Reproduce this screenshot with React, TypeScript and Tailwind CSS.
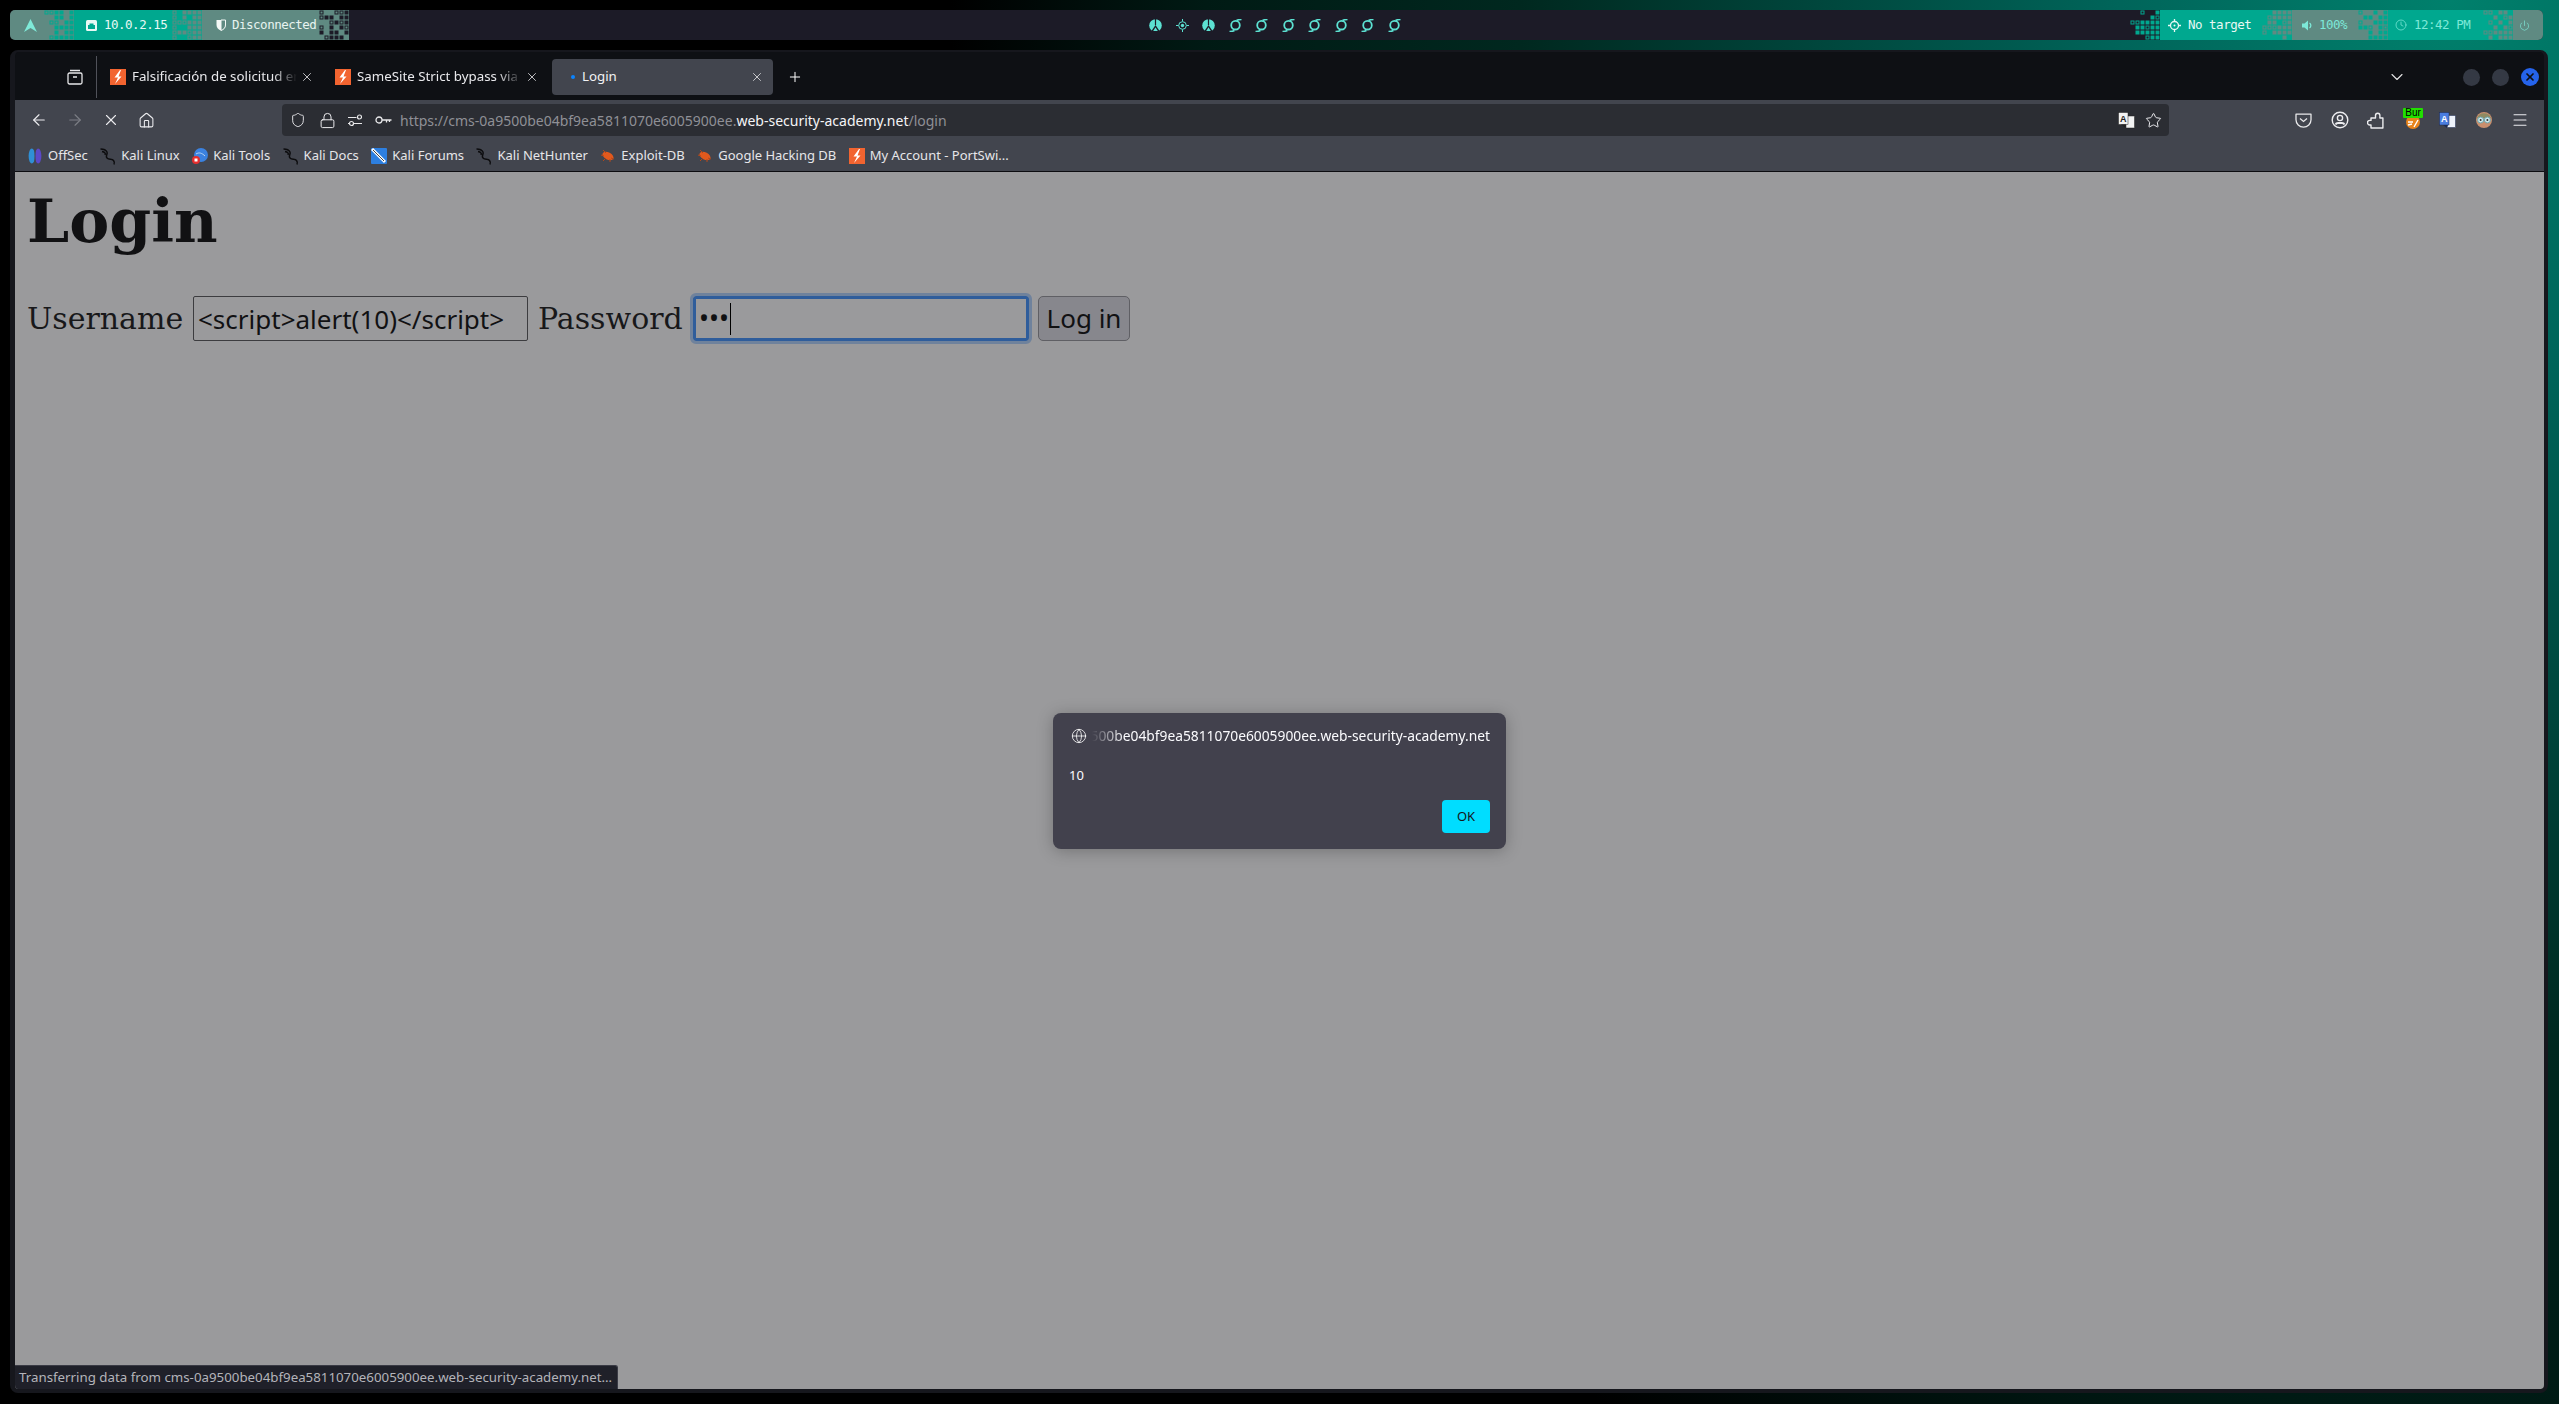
import React from "react";
import {
  ArrowLeft,
  ArrowRight,
  ChevronDown,
  Clock,
  Globe,
  House,
  Lock,
  Menu,
  Plus,
  Power,
  Shield,
  Star,
  X,
} from "lucide-react";

const TEAL = "#00a88f";
const GREY = "#5f8a82";
const DARK = "#1c1b27";

// pixel fade between two bar segments
const Dither = ({ from, to, seed }: { from: string; to: string; seed: number }) => {
  const cells: React.ReactNode[] = [];
  for (let c = 0; c < 6; c++) {
    for (let r = 0; r < 6; r++) {
      const h = Math.abs(Math.sin((c + 1) * 12.9898 + (r + 1) * 78.233 + seed) * 43758.5453) % 1;
      const h2 = (h * 7.31) % 1;
      const x = c * 5 + 0.5;
      const y = r * 5 + 0.5;
      if (h < (c + 0.5) / 6) {
        cells.push(<rect key={`${c}-${r}`} x={x} y={y} width={4} height={4} fill={to} />);
      } else if (h2 < 0.3) {
        cells.push(
          <rect key={`${c}-${r}`} x={x + 0.5} y={y + 0.5} width={3} height={3} fill="none" stroke={to} strokeWidth={1} />
        );
      }
    }
  }
  return (
    <svg width="30" height="30" viewBox="0 0 30 30" className="shrink-0" style={{ background: from }}>
      {cells}
    </svg>
  );
};

const Swirl = () => (
  <svg width="13" height="13" viewBox="0 0 13 13" fill="none">
    <circle cx="6.5" cy="6.2" r="4.3" stroke="#5ce1d2" strokeWidth="1.8" />
    <path d="M0.5 12.5c2 0 3.5-.3 5-1M12.5.5c-2 0-3.5.3-5 1" stroke="#5ce1d2" strokeWidth="1.6" />
  </svg>
);

const Radiation = () => (
  <svg width="13" height="13" viewBox="0 0 13 13">
    <circle cx="6.5" cy="6.5" r="6.3" fill="#5ce1d2" />
    <path d="M6.5 0v6" stroke="#1c1b27" strokeWidth="1.2" />
    <path d="M6.500 6 1.800 13h9.400z" fill="#1c1b27" />
    <path d="M6.500 8.200 4.200 12h4.600z" fill="#5ce1d2" />
  </svg>
);

const Target = () => (
  <svg width="13" height="13" viewBox="0 0 13 13" fill="none" stroke="#5ce1d2">
    <circle cx="6.5" cy="6.5" r="3.8" />
    <circle cx="6.5" cy="6.5" r="1.7" fill="#5ce1d2" stroke="none" />
    <path d="M6.5 0v2.5M6.5 10.5V13M0 6.5h2.5M10.5 6.5H13" />
  </svg>
);

const PortSwigger = () => (
  <svg width="16" height="16" viewBox="0 0 16 16" className="shrink-0">
    <rect width="16" height="16" fill="#f26430" />
    <path d="M10 1 4.500 8.500h3.500L5 15l6.500-7.500H8.500L11 1z" fill="#fff" />
  </svg>
);

const Dragon = () => (
  <svg width="16" height="17" viewBox="0 0 16 17" fill="none" stroke="#0c0c0e" strokeWidth="1.5" className="shrink-0">
    <path d="M0.500 1c3.500 0 5.500 1 6.500 3S5 8 7 10s5 .5 6.500 2.500.5 4 .5 4M2 3.500C4.500 4 6 5 5 7" />
  </svg>
);

const Roach = () => (
  <svg width="16" height="16" viewBox="0 0 16 16" className="shrink-0">
    <ellipse cx="8" cy="8" rx="6" ry="3.6" fill="#e2591d" transform="rotate(28 8 8)" />
    <path d="M3 2l3 3M1 7l3 1M3 13l3-3M10 14l0-3M14 11l-3-1" stroke="#b3481a" strokeWidth="1" />
  </svg>
);

const OffSecIcon = () => (
  <svg width="16" height="16" viewBox="0 0 16 16" className="shrink-0">
    <ellipse cx="4.8" cy="8" rx="3.2" ry="7.4" fill="#2f8fd6" />
    <ellipse cx="11.2" cy="8" rx="3.2" ry="7.4" fill="#5b49c9" />
    <rect x="7.5" y="0" width="1" height="16" fill="#42454e" />
  </svg>
);

const KaliToolsIcon = () => (
  <svg width="16" height="16" viewBox="0 0 16 16" className="shrink-0">
    <circle cx="9" cy="7" r="7" fill="#3b82e0" />
    <path d="M4 6c3-2 6-1 9 2" stroke="#b9d6f5" strokeWidth="1" fill="none" />
    <circle cx="4" cy="12" r="4" fill="#e52e2e" />
    <rect x="2.5" y="10.5" width="3" height="3" fill="#fff" />
  </svg>
);

const ForumsIcon = () => (
  <svg width="16" height="16" viewBox="0 0 16 16" className="shrink-0">
    <rect width="16" height="16" rx="1" fill="#2d7fe0" />
    <path d="M1 1l13 13" stroke="#fff" strokeWidth="3" />
    <path d="M2 2l11 11" stroke="#111" strokeWidth="0.8" />
  </svg>
);

const Translate = () => (
  <svg width="17" height="17" viewBox="0 0 17 17">
    <rect x="8" y="4" width="8.5" height="12" fill="#f2f2f2" stroke="#222" strokeWidth="0.5" />
    <rect x="0.5" y="0.5" width="9.5" height="12" fill="#f2f2f2" stroke="#222" strokeWidth="0.5" />
    <path d="M3 12.5h5l-1 3z" fill="#222" />
    <text x="5.2" y="10" fontSize="9" fontWeight="700" textAnchor="middle" fontFamily="'Liberation Sans', sans-serif" fill="#222">
      A
    </text>
  </svg>
);

const BlueTranslate = () => (
  <svg width="17" height="17" viewBox="0 0 17 17">
    <rect x="8" y="3.5" width="8.5" height="12" fill="#eef3fb" stroke="#1d2b52" strokeWidth="0.5" />
    <rect x="0.5" y="0.5" width="9.5" height="12.5" fill="#4a7de0" stroke="#1d2b52" strokeWidth="0.5" />
    <path d="M4 13h5l-1 3z" fill="#1d2b52" />
    <text x="5.2" y="10" fontSize="9" fontWeight="700" textAnchor="middle" fontFamily="'Liberation Sans', sans-serif" fill="#fff">
      A
    </text>
  </svg>
);

const Avatar = () => (
  <svg width="16" height="16" viewBox="0 0 16 16">
    <circle cx="8" cy="8" r="8" fill="#c98f6e" />
    <path d="M1 6a7.5 7.5 0 0 1 14 0z" fill="#8f8a62" />
    <circle cx="4.6" cy="8" r="3" fill="#cfe9ec" stroke="#6fa6ac" />
    <circle cx="11.4" cy="8" r="3" fill="#cfe9ec" stroke="#6fa6ac" />
    <circle cx="4.6" cy="8" r="1" fill="#333" />
    <circle cx="11.4" cy="8" r="1" fill="#333" />
  </svg>
);

const BurpExt = () => (
  <div className="relative flex h-[18px] w-[20px] items-end justify-center">
    <svg width="16" height="15" viewBox="0 0 16 15">
      <circle cx="8" cy="8" r="7" fill="#e8841c" />
      <path d="M3 8h5M3 11l4-1M9 13l4-7" stroke="#fff" strokeWidth="1.4" />
    </svg>
    <span className="absolute left-0 top-[-3px] h-[10px] w-[20px] overflow-hidden rounded-[1px] bg-[#22e000] text-center text-[10px] leading-[10px] text-black [font-family:'Liberation_Sans',sans-serif]">
      Bur
    </span>
  </div>
);

const Sliders = () => (
  <svg width="16" height="16" viewBox="0 0 16 16" fill="none" stroke="#e8e8ea" strokeWidth="1.2">
    <path d="M1 5.5h8.5M1 11.5h1.500M7 11.500h8" />
    <circle cx="12.5" cy="5" r="2" />
    <circle cx="4.5" cy="11.5" r="2" />
  </svg>
);

const Key = () => (
  <svg width="17" height="10" viewBox="0 0 17 10" fill="none" stroke="#e8e8ea" strokeWidth="1.300">
    <circle cx="4" cy="5" r="3" />
    <path d="M7 5h9.500M11.500 5v2.500M14.500 5v2" />
  </svg>
);

const Pocket = () => (
  <svg width="17" height="15" viewBox="0 0 17 15" fill="none" stroke="#e8e8ea" strokeWidth="1.3">
    <path d="M1 1.2h15v5.5a7.5 7.5 0 0 1-15 0z" strokeLinejoin="round" />
    <path d="M5 5.5l3.5 3 3.5-3" />
  </svg>
);

const Account = () => (
  <svg width="18" height="18" viewBox="0 0 18 18" fill="none" stroke="#ececef" strokeWidth="1.4">
    <circle cx="9" cy="9" r="7.800" />
    <circle cx="9" cy="7" r="2.600" />
    <path d="M4.500 13.500c.5-1 1.500-1.500 2.500-1.500h4c1 0 2 .5 2.500 1.500" strokeWidth="2" />
  </svg>
);

const Extension = () => (
  <svg width="17" height="17" viewBox="0 0 17 17" fill="none" stroke="#ececef" strokeWidth="1.400" strokeLinejoin="round">
    <path d="M6 6h2.500V3.500a2.200 2.200 0 0 1 4.400 0V6h3v10H4v-3H2.800a2.300 2.300 0 0 1 0-4.600H4V6z" />
  </svg>
);

const tabClose = <X size={14} strokeWidth={1.4} className="ml-auto shrink-0 text-[#e4e4e6]" />;

const Tab = ({ title }: { title: string }) => (
  <div className="flex h-[36px] w-[221px] shrink-0 items-center pl-[8px] pr-[9px]">
    <PortSwigger />
    <span className="ml-[6px] w-[165px] overflow-hidden whitespace-nowrap text-[13.3px] text-[#e9e9ec] [mask-image:linear-gradient(to_left,transparent,black_24px)]">
      {title}
    </span>
    {tabClose}
  </div>
);

const bookmarks: [React.ReactNode, string][] = [
  [<OffSecIcon />, "OffSec"],
  [<Dragon />, "Kali Linux"],
  [<KaliToolsIcon />, "Kali Tools"],
  [<Dragon />, "Kali Docs"],
  [<ForumsIcon />, "Kali Forums"],
  [<Dragon />, "Kali NetHunter"],
  [<Roach />, "Exploit-DB"],
  [<Roach />, "Google Hacking DB"],
  [<PortSwigger />, "My Account - PortSwi..."],
];

export default function App() {
  const mono = "[font-family:'DejaVu_Sans_Mono',monospace] text-[12.5px] tracking-[-0.5px]";

  return (
    <div className="flex h-[1404px] w-[2559px] flex-col overflow-hidden bg-[radial-gradient(ellipse_1500px_1700px_at_2450px_0px,#00806c_0%,#00655a_22%,#00281f_62%,#001a14_83%,#000000_100%)] [font-family:'Noto_Sans',sans-serif]">
      {/* top bar */}
      <div className="ml-[10px] mr-[16px] mt-[10px] flex h-[30px] shrink-0 items-center overflow-hidden rounded-[5px] bg-[#1c1b27]">
        <div className="flex h-full w-[34px] shrink-0 items-center justify-end bg-[#5f8a82] pr-[7px]">
          <svg width="13" height="13" viewBox="0 0 13 13">
            <path d="M6.5 0 13 13 6.5 9 0 13z" fill="#7fead8" />
          </svg>
        </div>
        <Dither from={GREY} to={TEAL} seed={1} />
        <div className={`flex h-full w-[98px] shrink-0 items-center gap-[7px] bg-[#00a88f] pl-[12px] text-[#e8f8f4] ${mono}`}>
          <svg width="11" height="11" viewBox="0 0 11 11" className="shrink-0">
            <rect width="11" height="11" rx="1.5" fill="#e8f8f4" />
            <path d="M2 9V5h1.5V3.5h4V5H9v4z" fill="#00a88f" />
          </svg>
          10.0.2.15
        </div>
        <Dither from={TEAL} to={GREY} seed={2} />
        <div className={`flex h-full w-[117px] shrink-0 items-center gap-[6px] bg-[#5f8a82] pl-[14px] text-[#e8f4f0] ${mono}`}>
          <svg width="10" height="12" viewBox="0 0 10 12" className="shrink-0">
            <path d="M0.5 1h9v5c0 3-2 4.5-4.5 5.5C2.500 10.500 0.500 9 0.500 6z" fill="#f3f8f6" />
            <path d="M5 1h4.500v5c0 3-2 4.500-4.500 5.500z" fill="#5f8a82" stroke="#f3f8f6" strokeWidth="1" />
          </svg>
          Disconnected
        </div>
        <Dither from={GREY} to={DARK} seed={3} />
        <div className="flex h-full flex-1 items-center pl-[800px]">
          <div className="flex items-center gap-[13.500px]">
            <Radiation />
            <Target />
            <Radiation />
            <Swirl />
            <Swirl />
            <Swirl />
            <Swirl />
            <Swirl />
            <Swirl />
            <Swirl />
          </div>
        </div>
        <Dither from={DARK} to={TEAL} seed={4} />
        <div className={`flex h-full w-[102px] shrink-0 items-center gap-[7px] bg-[#00a88f] pl-[8px] text-[#e8f8f4] ${mono}`}>
          <svg width="13" height="13" viewBox="0 0 13 13" fill="none" stroke="#e8f8f4" strokeWidth="1.3" className="shrink-0">
            <circle cx="6.5" cy="6.5" r="4" />
            <circle cx="6.5" cy="6.5" r="1" fill="#e8f8f4" stroke="none" />
            <path d="M6.500 0v2.500M6.500 10.500V13M0 6.500h2.500M10.500 6.500H13" />
          </svg>
          No target
        </div>
        <Dither from={TEAL} to={GREY} seed={5} />
        <div className={`flex h-full w-[66px] shrink-0 items-center gap-[6px] bg-[#5f8a82] pl-[10px] text-[#7de8d8] ${mono}`}>
          <svg width="11" height="11" viewBox="0 0 11 11" className="shrink-0">
            <path d="M0 3.500h2.500L6 .5v10L2.500 7.500H0z" fill="#7de8d8" />
            <path d="M7.500 3a3 3 0 0 1 0 5" stroke="#7de8d8" fill="none" strokeWidth="1.300" />
          </svg>
          100%
        </div>
        <Dither from={GREY} to={TEAL} seed={6} />
        <div className={`flex h-full w-[95px] shrink-0 items-center gap-[7px] bg-[#00a88f] pl-[7px] text-[#7de8d8] ${mono}`}>
          <Clock size={12} strokeWidth={1.500} className="shrink-0" />
          12:42 PM
        </div>
        <Dither from={TEAL} to={GREY} seed={7} />
        <div className="flex h-full w-[30px] shrink-0 items-center bg-[#5f8a82] pl-[6px] text-[#7de8d8]">
          <Power size={11} strokeWidth={1.500} />
        </div>
      </div>

      {/* browser window */}
      <div className="ml-[10px] mr-[11px] mt-[10px] flex h-[1343px] shrink-0 flex-col overflow-hidden rounded-[8px] border-b-[4px] border-l-[5px] border-r-[4px] border-t-[2px] border-[#16171d] bg-[#0e1014]">
        {/* tabs */}
        <div className="flex h-[48px] shrink-0 items-center bg-[#0e1014] pt-[2px] text-white">
          <div className="flex h-[42px] w-[82px] shrink-0 items-center justify-end border-r border-[#50525a] pr-[13px]">
            <svg width="16" height="16" viewBox="0 0 16 16" fill="none" stroke="#e8e8ea" strokeWidth="1.300">
              <rect x="1" y="4" width="14" height="11" rx="1.500" />
              <path d="M3 1.500h10M6 8h4" />
            </svg>
          </div>
          <div className="ml-[5px] flex shrink-0 items-center gap-[4px]">
            <Tab title="Falsificación de solicitud entre sitios" />
            <Tab title="SameSite Strict bypass via sibling domain" />
            <div className="flex h-[36px] w-[221px] shrink-0 items-center rounded-[4px] bg-[#42454e] pl-[19px] pr-[9px]">
              <span className="h-[4px] w-[4px] rounded-full bg-[#0a84ff]" />
              <span className="ml-[7px] text-[13.3px] text-[#f2f2f4]">Login</span>
              {tabClose}
            </div>
            <Plus size={16} strokeWidth={1.500} className="ml-[10px]" />
          </div>
          <ChevronDown size={20} strokeWidth={1.300} className="ml-auto text-[#e4e4e6]" />
          <span className="ml-[56px] h-[17px] w-[17px] rounded-full bg-[#343944]" />
          <span className="ml-[12px] h-[17px] w-[17px] rounded-full bg-[#343944]" />
          <span className="ml-[12px] mr-[5px] flex h-[18px] w-[18px] items-center justify-center rounded-full bg-[#2563eb]">
            <X size={12} strokeWidth={3.500} className="text-[#0e1014]" />
          </span>
        </div>

        {/* toolbar */}
        <div className="flex h-[39px] shrink-0 items-center bg-[#42454e] pt-[1px] text-[#ececef]">
          <ArrowLeft size={18} strokeWidth={1.500} className="ml-[15px]" />
          <ArrowRight size={18} strokeWidth={1.500} className="ml-[18px] text-[#7c7e85]" />
          <X size={18} strokeWidth={1.500} className="ml-[18px]" />
          <House size={17} strokeWidth={1.500} className="ml-[18px]" />
          <div className="ml-[127px] flex h-[32px] w-[1887px] shrink-0 items-center rounded-[4px] bg-[#2b2d33] pl-[8px]">
            <Shield size={16} strokeWidth={1.400} />
            <Lock size={17} strokeWidth={1.400} className="ml-[13px]" />
            <span className="ml-[11px]">
              <Sliders />
            </span>
            <span className="ml-[12px]">
              <Key />
            </span>
            <span className="ml-[8px] whitespace-nowrap text-[14px] text-[#8f9096]">
              https://cms-0a9500be04bf9ea5811070e6005900ee.
              <span className="text-[#f4f4f6]">web-security-academy.net</span>/login
            </span>
            <span className="ml-auto">
              <Translate />
            </span>
            <Star size={17} strokeWidth={1.400} className="ml-[10px] mr-[7px]" />
          </div>
          <span className="ml-[126px]">
            <Pocket />
          </span>
          <span className="ml-[19px]">
            <Account />
          </span>
          <span className="ml-[18px]">
            <Extension />
          </span>
          <span className="ml-[19px]">
            <BurpExt />
          </span>
          <span className="ml-[16px]">
            <BlueTranslate />
          </span>
          <span className="ml-[20px]">
            <Avatar />
          </span>
          <Menu size={18} strokeWidth={1.400} className="ml-[19px]" />
        </div>

        {/* bookmarks */}
        <div className="flex h-[33px] shrink-0 items-center gap-[12.400px] border-b border-[#0c0c10] bg-[#42454e] pl-[12px] pt-[2px] text-[13px] text-[#e6e6e9]">
          {bookmarks.map(([icon, label]) => (
            <div key={label} className="flex items-center gap-[5px] whitespace-nowrap">
              {icon}
              <span>{label}</span>
            </div>
          ))}
        </div>

        {/* page, dimmed behind the alert */}
        <div className="relative flex-1 bg-[#9a9a9c] pl-[12px] text-[#111113] [font-family:'DejaVu_Serif',serif]">
          <h1 className="mt-[14px] text-[60px] font-bold leading-[70px]">Login</h1>
          <form className="mt-[40px] flex h-[45px] items-center text-[30px] text-[#18181a]">
            <label className="w-[166px] shrink-0">Username</label>
            <input
              readOnly
              value="<script>alert(10)</script>"
              className="h-[45px] w-[335px] shrink-0 rounded-[2px] border border-[#3c3c3f] bg-transparent px-[4px] text-[26px] text-[#111113] outline-none [font-family:'Noto_Sans',sans-serif]"
            />
            <label className="ml-[10px] w-[155px] shrink-0">Password</label>
            <div className="flex h-[45px] w-[336px] shrink-0 items-center rounded-[3px] border-[3px] border-[#2f5d9b] pl-[3px] text-[26.5px] text-[#111113] outline-[3px] outline-[#6f829c] [font-family:'Noto_Sans',sans-serif]">
              <span>•••</span>
              <span className="ml-[1px] h-[32px] w-px bg-black" />
            </div>
            <button
              type="button"
              className="ml-[9px] h-[45px] w-[92px] shrink-0 rounded-[5px] border border-[#5f5f64] bg-[#87878d] text-[26px] text-[#111113] [font-family:'Noto_Sans',sans-serif]"
            >
              Log in
            </button>
          </form>

          {/* alert */}
          <div className="absolute left-[1038px] top-[541px] h-[136px] w-[453px] rounded-[8px] bg-[#42414d] pl-[16px] pr-[16px] pt-[13px] shadow-[0_2px_16px_rgba(0,0,0,0.25)] [font-family:'Noto_Sans',sans-serif]">
            <div className="flex h-[20px] items-center">
              <Globe size={16} strokeWidth={1.200} className="ml-[2px] shrink-0 text-white" />
              <span className="ml-[5px] w-[398px] overflow-hidden whitespace-nowrap text-right text-[13.8px] text-[#fbfbfe] [direction:rtl] [mask-image:linear-gradient(to_right,transparent,black_32px)]">
                cms-0a9500be04bf9ea5811070e6005900ee.web-security-academy.net
              </span>
            </div>
            <p className="mt-[19px] text-[13px] leading-[20px] text-[#fbfbfe]">10</p>
            <div className="mt-[15px] flex justify-end">
              <button
                type="button"
                className="h-[33px] w-[48px] rounded-[4px] bg-[#00ddff] text-[13px] text-[#15141a]"
              >
                OK
              </button>
            </div>
          </div>

          {/* status */}
          <div className="absolute bottom-0 left-0 flex h-[24px] w-[603px] items-center overflow-hidden whitespace-nowrap rounded-tr-[3px] border-r border-t border-[#3a3b45] bg-[#1f2029] pl-[4px] text-[13.300px] text-[#b4b4ba] [font-family:'Noto_Sans',sans-serif]">
            Transferring data from cms-0a9500be04bf9ea5811070e6005900ee.web-security-academy.net…
          </div>
        </div>
      </div>
    </div>
  );
}
